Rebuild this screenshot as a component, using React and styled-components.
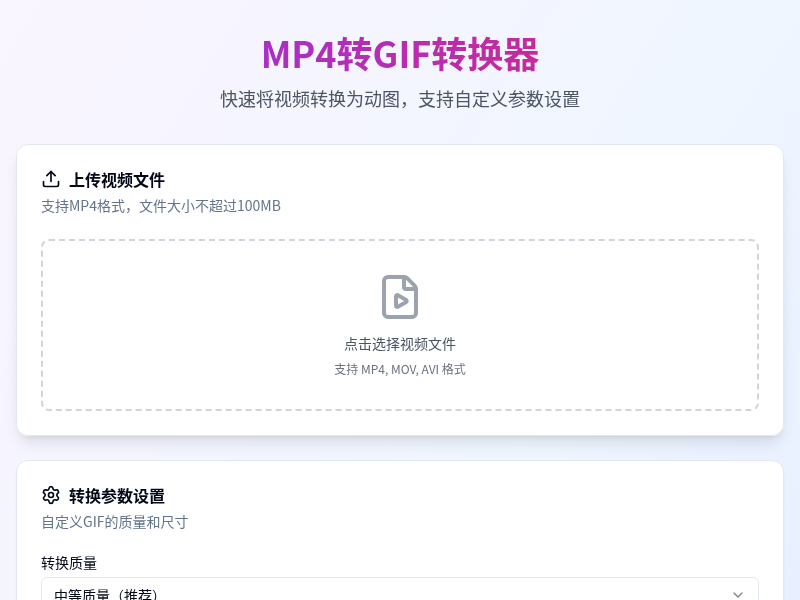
import React from "react";
import styled, { createGlobalStyle } from "styled-components";
import { ChevronDown, FileVideo, Settings, Upload } from "lucide-react";

const GlobalStyle = createGlobalStyle`
    * {
        box-sizing: border-box;
    }
    body {
        margin: 0;
        font-family: "Noto Sans CJK JP", "Noto Sans", sans-serif;
        color: #020817;
    }
`;

const Page = styled.div`
    min-height: 1300px;
    padding: 32px 16px;
    background: linear-gradient(to bottom right, #faf5ff, #eff6ff, #e0e7ff);
`;

const Header = styled.header`
    margin-bottom: 32px;
    text-align: center;
    will-change: transform;
`;

const Title = styled.h1`
    margin: 0 0 8px;
    font-size: 36px;
    line-height: 40px;
    padding-bottom: 4px;
    font-weight: 700;
    color: transparent;
    background: linear-gradient(90deg, #9333ea, #db2777);
    background-clip: text;
    -webkit-background-clip: text;
`;

const Subtitle = styled.p`
    margin: 0;
    font-size: 18px;
    line-height: 28px;
    color: #4b5563;
`;

const Card = styled.section`
    margin-bottom: 24px;
    padding: 24px;
    background: rgba(255, 255, 255, 0.99);
    backdrop-filter: blur(4px);
    border: 1px solid #e2e8f0;
    border-radius: 12px;
    box-shadow: ${(p) =>
        p.$raised
            ? "0 10px 15px -3px rgba(0, 0, 0, 0.1), 0 4px 6px -4px rgba(0, 0, 0, 0.1)"
            : "0 1px 2px rgba(0, 0, 0, 0.05)"};
`;

const CardTitle = styled.h2`
    display: flex;
    align-items: center;
    gap: 8px;
    margin: 0 0 6px;
    font-size: 16px;
    line-height: 20px;
    font-weight: 700;
`;

const CardHint = styled.p`
    margin: 0;
    font-size: 14px;
    line-height: 20px;
    color: #64748b;
`;

const DropZone = styled.div`
    display: flex;
    flex-direction: column;
    align-items: center;
    height: 172px;
    margin-top: 24px;
    padding-top: 32px;
    border: 2px dashed #d1d5db;
    border-radius: 8px;
    text-align: center;
`;

const DropIcon = styled(FileVideo)`
    display: block;
    margin-bottom: 12px;
    color: #9ca3af;
`;

const DropText = styled.p`
    margin: 0 0 8px;
    font-size: 14px;
    line-height: 20px;
    color: #4b5563;
`;

const DropNote = styled.p`
    margin: 0;
    font-size: 12px;
    line-height: 16px;
    color: #6b7280;
`;

const Field = styled.div`
    margin-top: 21px;
`;

const Label = styled.label`
    display: block;
    margin-bottom: 5px;
    font-size: 14px;
    line-height: 20px;
    font-weight: 400;
`;

const Select = styled.div`
    display: flex;
    justify-content: space-between;
    align-items: center;
    height: 36px;
    padding: 0 12px;
    border: 1px solid #e2e8f0;
    border-radius: 6px;
    font-size: 14px;
`;

const SelectIcon = styled(ChevronDown)`
    color: #020817;
    opacity: 0.5;
`;

const App = () => {
    return (
        <Page>
            <GlobalStyle />
            <Header>
                <Title>MP4转GIF转换器</Title>
                <Subtitle>快速将视频转换为动图，支持自定义参数设置</Subtitle>
            </Header>

            <Card $raised>
                <CardTitle>
                    <Upload size={20} />
                    上传视频文件
                </CardTitle>
                <CardHint>支持MP4格式，文件大小不超过100MB</CardHint>
                <DropZone>
                    <DropIcon size={48} />
                    <DropText>点击选择视频文件</DropText>
                    <DropNote>支持 MP4, MOV, AVI 格式</DropNote>
                </DropZone>
            </Card>

            <Card>
                <CardTitle>
                    <Settings size={20} />
                    转换参数设置
                </CardTitle>
                <CardHint>自定义GIF的质量和尺寸</CardHint>
                <Field>
                    <Label>转换质量</Label>
                    <Select>
                        中等质量（推荐）
                        <SelectIcon size={16} />
                    </Select>
                </Field>
            </Card>
        </Page>
    );
};

export default App;
